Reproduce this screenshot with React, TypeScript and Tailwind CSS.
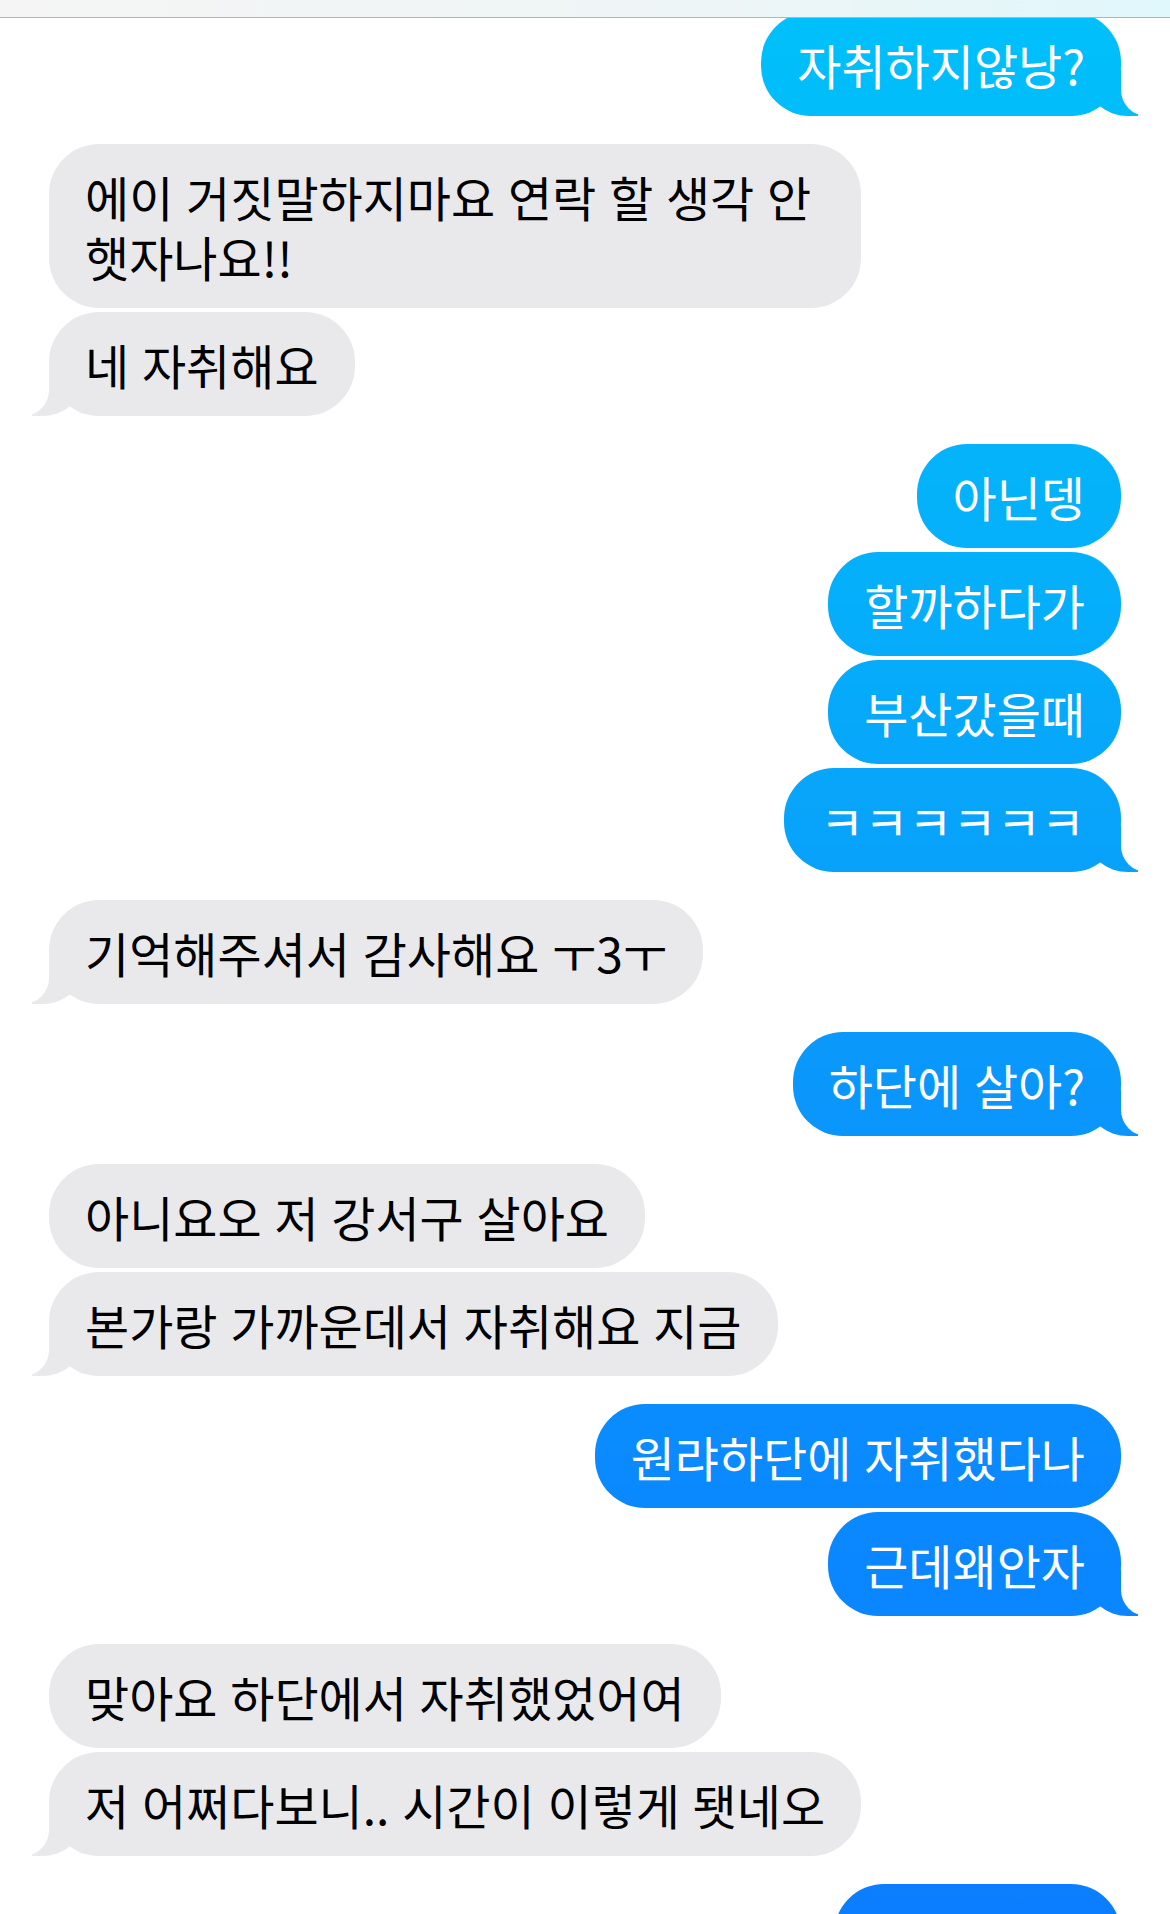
const BLUE =
  "bg-fixed bg-[linear-gradient(to_bottom,#00c0fa_0%,#05b0fa_30%,#0a98fb_55%,#0a88ff_80%,#0a7eff_100%)]";

type Group = { me: boolean; msgs: string[] };

const groups: Group[] = [
  { me: true, msgs: ["자취하지않낭?"] },
  { me: false, msgs: ["에이 거짓말하지마요 연락 할 생각 안\n햇자나요!!", "네 자취해요"] },
  { me: true, msgs: ["아닌뎅", "할까하다가", "부산갔을때", "ㅋㅋㅋㅋㅋㅋ"] },
  { me: false, msgs: ["기억해주셔서 감사해요 ㅜ3ㅜ"] },
  { me: true, msgs: ["하단에 살아?"] },
  { me: false, msgs: ["아니요오 저 강서구 살아요", "본가랑 가까운데서 자취해요 지금"] },
  { me: true, msgs: ["원랴하단에 자취했다나", "근데왜안자"] },
  { me: false, msgs: ["맞아요 하단에서 자취했었어여", "저 어쩌다보니.. 시간이 이렇게 됏네오"] },
];

function Bubble({ text, me, tail }: { text: string; me: boolean; tail: boolean }) {
  // multi-line bubbles hit the max width
  const wrapped = text.includes("\n");
  return (
    <div
      className={`relative rounded-[50px] px-[36px] py-[22px] text-[48px] leading-[60px] [word-spacing:2px] whitespace-pre-line ${
        me ? `${BLUE} text-white` : "bg-[#e9e9eb] text-black"
      } ${wrapped ? "w-[812px]" : ""}`}
    >
      {tail && me && (
        <>
          <span className={`absolute bottom-0 right-[-17px] h-[46px] w-[50px] rounded-bl-[40px_34px] ${BLUE}`} />
          <span className="absolute bottom-0 right-[-45px] h-[46px] w-[45px] rounded-bl-[26px] bg-white" />
        </>
      )}
      {tail && !me && (
        <>
          <span className="absolute bottom-0 left-[-17px] h-[46px] w-[50px] rounded-br-[40px_34px] bg-[#e9e9eb]" />
          <span className="absolute bottom-0 left-[-45px] h-[46px] w-[45px] rounded-br-[26px] bg-white" />
        </>
      )}
      <span className="relative">{text}</span>
    </div>
  );
}

export default function App() {
  return (
    <div
      className="relative h-[1914px] w-[1170px] overflow-hidden bg-white"
      style={{ fontFamily: '"Noto Sans CJK KR", "Noto Sans", sans-serif' }}
    >
      <div className="relative z-10 h-[18px] border-b border-[#b4b4b4] bg-[linear-gradient(to_right,#f5f5f5,#eef5f6_60%,#e0f7fb)]" />
      <div className="mt-[-6px] flex flex-col gap-[28px] px-[49px]">
        {groups.map((g, gi) => (
          <div key={gi} className={`flex flex-col gap-[4px] ${g.me ? "items-end" : "items-start"}`}>
            {g.msgs.map((m, i) => (
              <Bubble key={i} text={m} me={g.me} tail={i === g.msgs.length - 1} />
            ))}
          </div>
        ))}
        <div className="flex flex-col items-end">
          <div className={`h-[104px] w-[287px] rounded-[50px] ${BLUE}`} />
        </div>
      </div>
    </div>
  );
}
